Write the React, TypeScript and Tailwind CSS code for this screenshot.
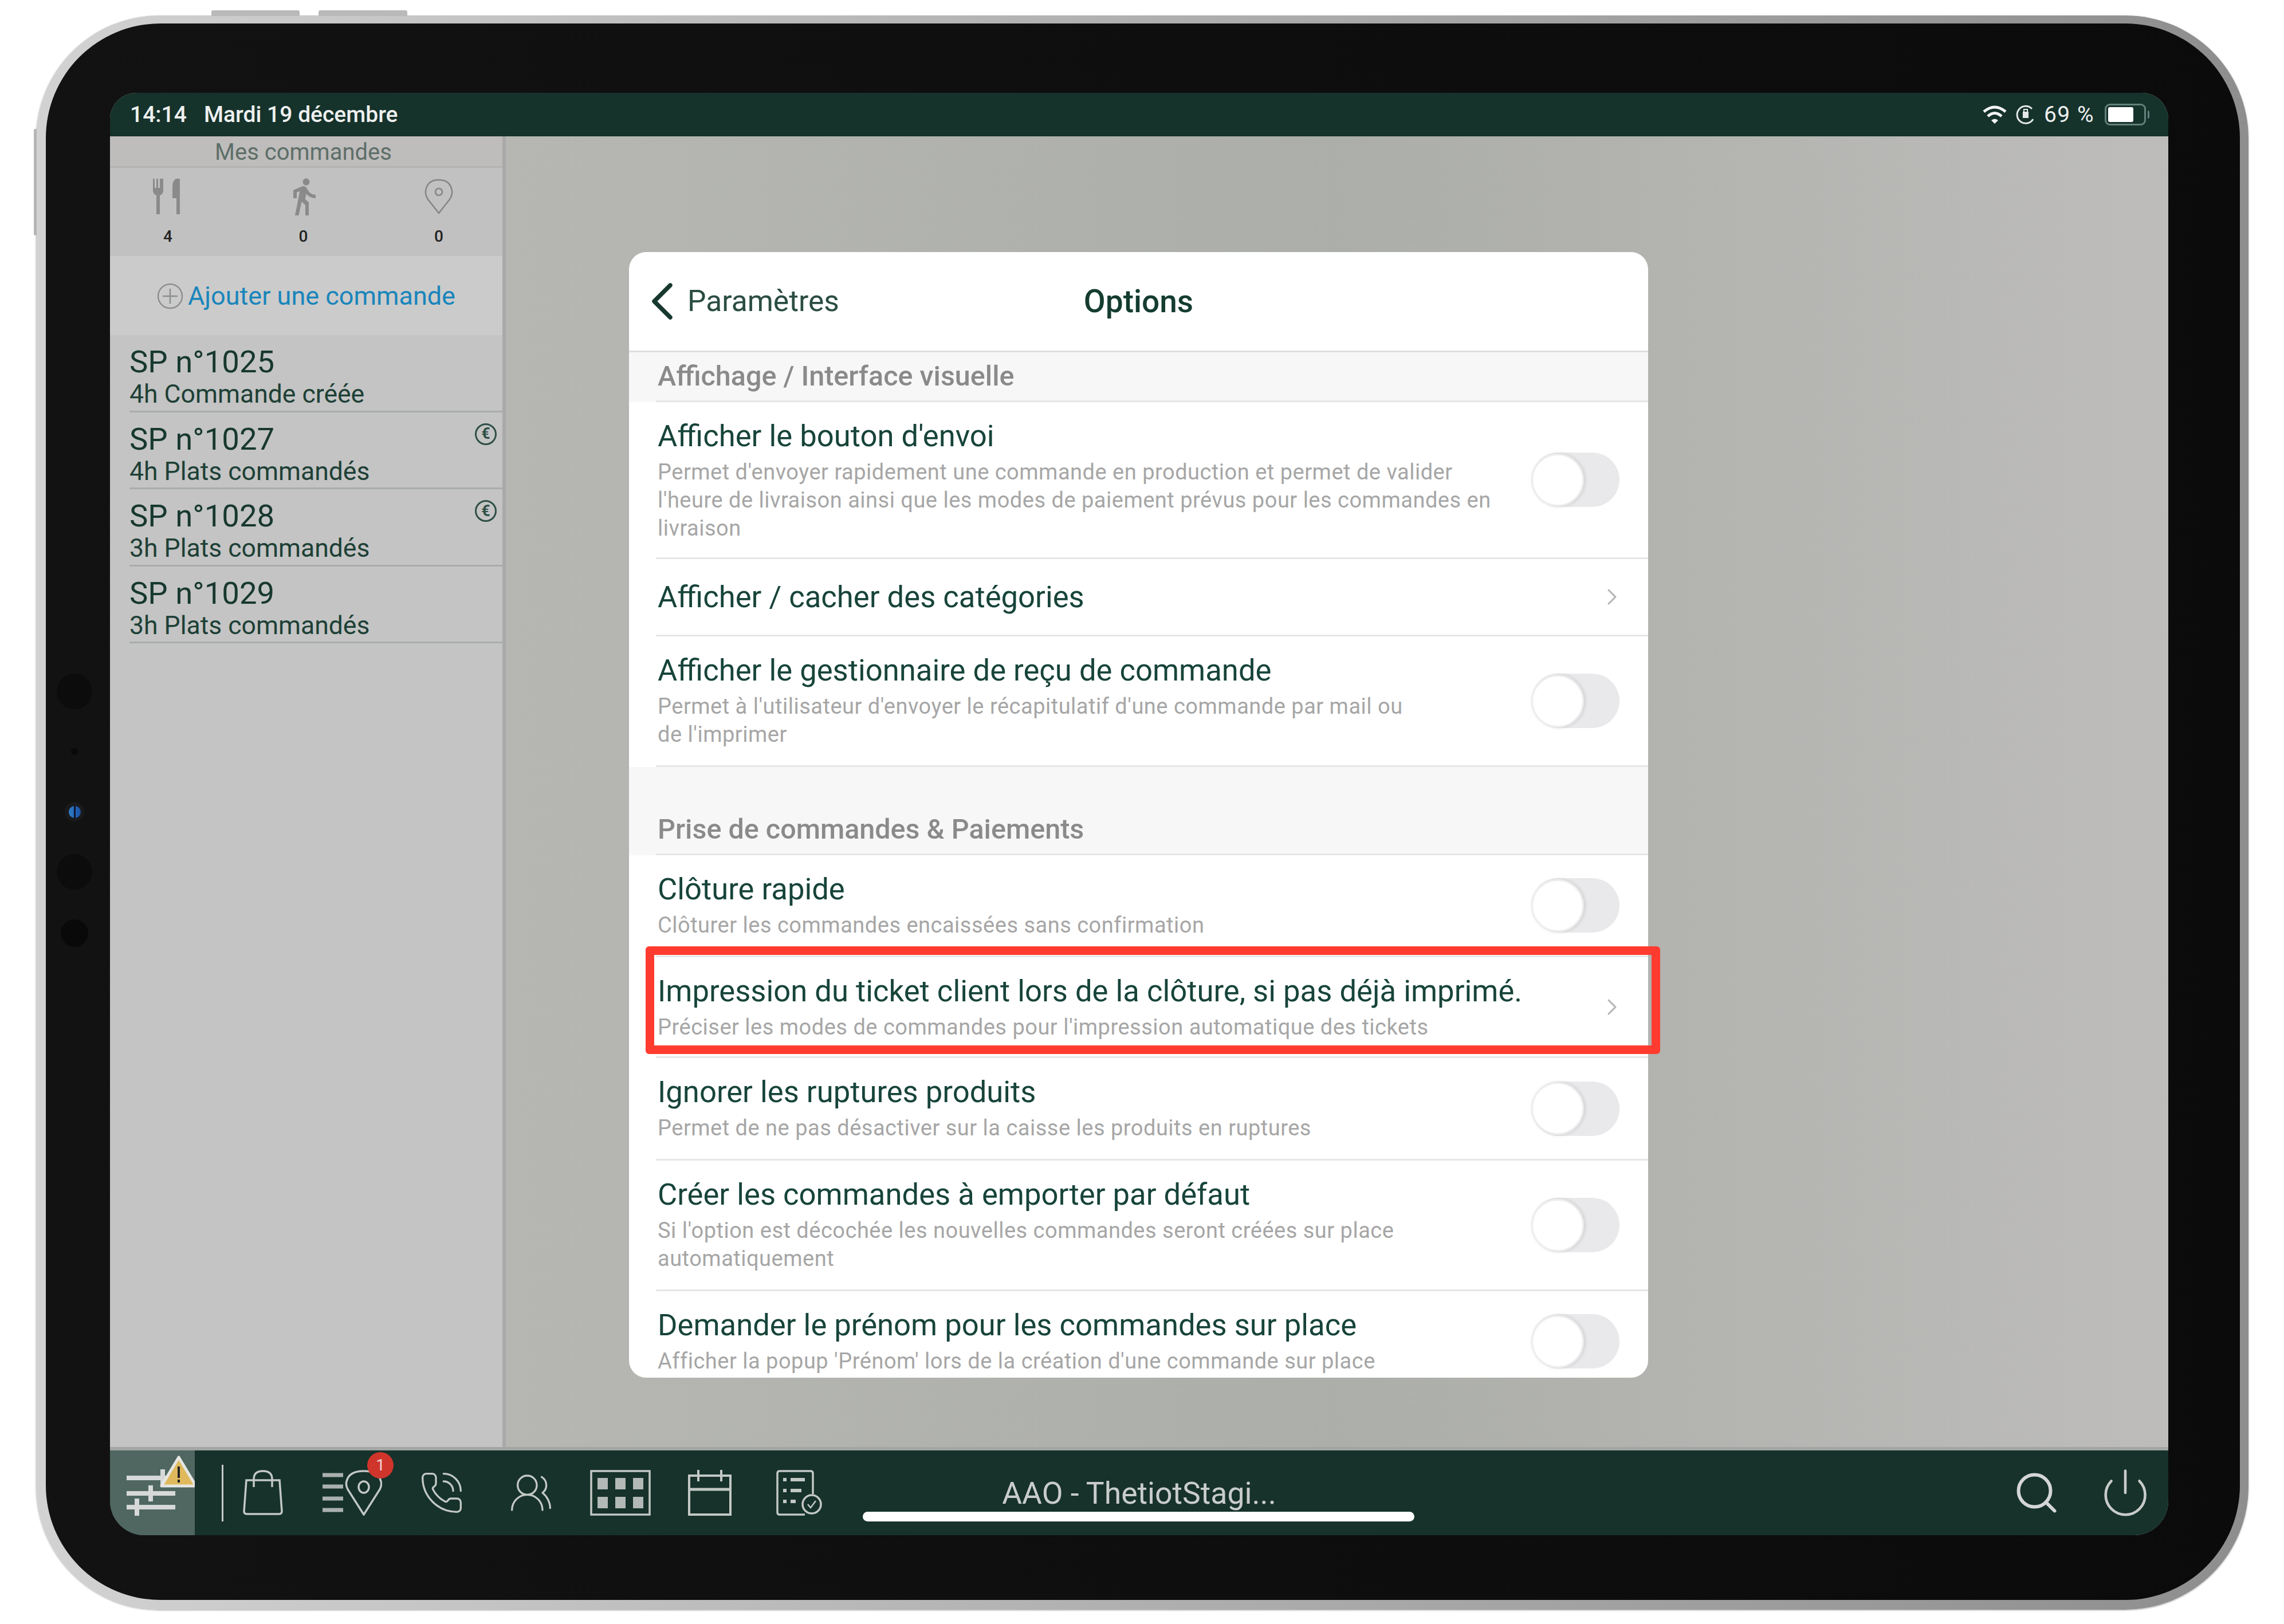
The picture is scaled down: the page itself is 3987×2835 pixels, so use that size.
import React from 'react'
import { ChevronLeft, ChevronRight, PhoneCall, Power, Search, UsersRound } from 'lucide-react'
import { MdDirectionsWalk } from 'react-icons/md'

const font = { fontFamily: '"Roboto", "Liberation Sans", sans-serif' }

const orders = [
  { name: 'SP n°1025', status: '4h Commande créée', paid: false },
  { name: 'SP n°1027', status: '4h Plats commandés', paid: true },
  { name: 'SP n°1028', status: '3h Plats commandés', paid: true },
  { name: 'SP n°1029', status: '3h Plats commandés', paid: false },
]

const Toggle = () => (
  <div className="flex h-[95px] w-[154px] shrink-0 items-center rounded-full bg-[#e9e9eb]">
    <div className="h-[92px] w-[92px] rounded-full border-[3px] border-[#eeeeee] bg-white shadow-[2px_0_6px_rgba(0,0,0,0.12)]" />
  </div>
)

const Chevron = () => <ChevronRight className="mr-[-11px] h-[48px] w-[48px] shrink-0 text-[#b4b4b4]" strokeWidth={1.5} />

const SectionHeader: React.FC<{ label: string; className: string }> = ({ label, className }) => (
  <div className={`flex items-end bg-[#f7f7f7] ${className}`}>
    <div className="ml-[47px] flex-1 border-b-[3px] border-[#e6e6e6] pb-[13px] pl-[3px] text-[48.5px] leading-[58px] font-medium text-[#8a8a8a]">
      {label}
    </div>
  </div>
)

const OptionRow: React.FC<{
  title: string
  desc?: React.ReactNode
  height: string
  chevron?: boolean
}> = ({ title, desc, height, chevron }) => (
  <div className={`ml-[47px] flex items-center justify-between border-b-[3px] border-[#e6e6e6] pr-[50px] pl-[3px] ${height}`}>
    <div className={desc ? 'self-start pt-[26px]' : ''}>
      <div className="text-[52.6px] leading-[66px] text-[#17443a]">{title}</div>
      {desc && <div className="mt-[6px] text-[38px] leading-[49px] tracking-[0.5px] text-[#a6a6a6]">{desc}</div>}
    </div>
    {chevron ? <Chevron /> : <Toggle />}
  </div>
)

const SliderTab = () => (
  <div className="relative flex h-full w-[148px] shrink-0 items-center bg-[#4f6760]">
    <svg width="148" height="148" viewBox="0 0 148 148" className="shrink-0">
      <g fill="#d6d9d8">
        <rect x="29" y="44" width="85" height="8" />
        <rect x="29" y="71" width="85" height="8" />
        <rect x="29" y="95" width="85" height="8" />
        <rect x="88" y="33" width="8" height="30" />
        <rect x="67" y="61" width="8" height="28" />
        <rect x="43" y="84" width="8" height="30" />
      </g>
      <path d="M120 12 L150 62 H90 Z" fill="#dfb95c" stroke="#e6e6e2" strokeWidth="5" strokeLinejoin="round" />
      <rect x="118" y="28" width="4" height="20" fill="#222" />
      <rect x="118" y="51" width="4" height="5" fill="#222" />
    </svg>
  </div>
)

const iconStroke = '#c3c8c5'

const BagIcon = () => (
  <svg width="70" height="80" viewBox="0 0 70 80" fill="none" stroke={iconStroke} strokeWidth="3.5">
    <path d="M6 18 H64 L68 72 Q68 77 63 77 H7 Q2 77 2 72 Z" />
    <path d="M19 30 V16 Q19 2 35 2 Q51 2 51 16 V30" />
  </svg>
)

const RouteIcon = () => (
  <div className="relative flex shrink-0">
    <svg width="104" height="80" viewBox="0 0 104 80" fill="none" stroke={iconStroke} strokeWidth="3.5">
      <g stroke="#a9b0ad" strokeWidth="7">
        <path d="M0 9 H36 M0 29 H36 M0 50 H36 M0 70 H36" />
      </g>
      <path d="M72 78 L44 34 Q40 26 42 20 Q46 2 72 2 Q98 2 102 20 Q104 26 100 34 Z" />
      <ellipse cx="72" cy="30" rx="9" ry="10" />
    </svg>
    <div className="absolute top-[-31px] right-[-20px] flex h-[46px] w-[46px] items-center justify-center rounded-full bg-[#d0352c] text-[28px] text-[#f2d6d4]">
      1
    </div>
  </div>
)

const GridIcon = () => (
  <svg width="106" height="80" viewBox="0 0 106 80" fill="none" className="shrink-0">
    <rect x="2" y="2" width="102" height="76" stroke={iconStroke} strokeWidth="3.5" />
    <g fill="#b3b9b6">
      <rect x="13" y="14" width="18" height="20" />
      <rect x="44" y="14" width="18" height="20" />
      <rect x="75" y="14" width="18" height="20" />
      <rect x="13" y="47" width="18" height="20" />
      <rect x="44" y="47" width="18" height="20" />
      <rect x="75" y="47" width="18" height="20" />
    </g>
  </svg>
)

const CalendarIcon = () => (
  <svg width="76" height="80" viewBox="0 0 76 80" fill="none" stroke={iconStroke} strokeWidth="4">
    <rect x="2" y="10" width="72" height="68" />
    <path d="M2 34 H74" strokeWidth="5" />
    <path d="M18 0 V20 M58 0 V20" />
  </svg>
)

const ChecklistIcon = () => (
  <svg width="80" height="80" viewBox="0 0 80 80" fill="none" stroke={iconStroke} strokeWidth="3.5">
    <path d="M50 78 H6 Q2 78 2 74 V6 Q2 2 6 2 H60 Q64 2 64 6 V42" />
    <path d="M12 17 H18 M25 17 H50 M12 36 H18 M25 36 H44 M12 55 H18 M25 55 H34" strokeWidth="6" />
    <circle cx="62" cy="60" r="16" />
    <path d="M55 60 L60 66 L69 54" strokeWidth="2.5" />
  </svg>
)

const WifiIcon = () => (
  <svg width="44" height="34" viewBox="0 0 44 34" fill="none" stroke="#f2f4f3" strokeWidth="5" strokeLinecap="butt">
    <path d="M3 12 Q22 -4 41 12" />
    <path d="M10 20 Q22 9 34 20" />
    <path d="M16 27 L22 33 L28 27 Q22 22 16 27 Z" fill="#f2f4f3" stroke="none" />
  </svg>
)

const LockIcon = () => (
  <svg width="34" height="36" viewBox="0 0 34 36" fill="none" stroke="#e4e8e6" strokeWidth="3">
    <path d="M28 8 A15 15 0 1 0 30 26" />
    <rect x="12" y="13" width="10" height="11" fill="#e4e8e6" stroke="none" />
    <path d="M14 13 V9 H20 V13" strokeWidth="2" />
  </svg>
)

const PinIcon = () => (
  <svg width="50" height="62" viewBox="0 0 50 62" fill="none" stroke="#858585" strokeWidth="2.5">
    <path d="M25 60 L6 36 Q1 28 2 21 Q5 2 25 2 Q45 2 48 21 Q49 28 44 36 Z" />
    <circle cx="25" cy="23" r="6" />
  </svg>
)

const CutleryIcon = () => (
  <svg width="52" height="62" viewBox="0 0 52 62" fill="#8a8a8a">
    <path d="M0 0 H3 V16 H6 V0 H9 V16 H12 V0 H15 V0 H18 V20 Q18 27 12 29 V62 H6 V29 Q0 27 0 20 Z" />
    <path d="M40 0 H47 V62 H41 V34 H34 V14 Q34 4 40 0 Z" />
  </svg>
)

const Sidebar = () => (
  <div className="flex w-[691px] shrink-0 flex-col border-r-[6px] border-[#a9a9a9] bg-[#c4c4c4]">
    <div className="flex h-[55px] items-center justify-center border-b-[3px] border-[#b5b2b2] bg-[#bfbcbc] pt-[3px] pr-[10px] text-[40px] text-[#5d6f68]">
      Mes commandes
    </div>
    <div className="flex h-[154px] items-start justify-center bg-[#c1c1c1] pt-[17px] pr-[10px]">
      {[<CutleryIcon key="a" />, <MdDirectionsWalk key="b" size={72} color="#8a8a8a" />, <PinIcon key="c" />].map((icon, i) => (
        <div key={i} className="flex w-[236.5px] shrink-0 flex-col items-center">
          <div className="flex h-[66px] items-center">{icon}</div>
          <div className="mt-[20px] text-[28px] leading-[34px] font-medium text-[#222222]">{i === 0 ? 4 : 0}</div>
        </div>
      ))}
    </div>
    <div className="flex h-[138px] items-center justify-center gap-[8px] bg-[#cbcbcb] pt-[2px] text-[45px] text-[#1985bb]">
      <svg width="46" height="46" viewBox="0 0 46 46" fill="none" stroke="#8b8f8e" strokeWidth="2.5">
        <circle cx="23" cy="23" r="21" />
        <path d="M23 10 V36 M10 23 H36" />
      </svg>
      <span>Ajouter une commande</span>
    </div>
    {orders.map((order) => (
      <div key={order.name} className="ml-[34px] flex h-[134.5px] flex-col justify-start border-b-[3px] border-[#a8adab] pt-[14px]">
        <div className="flex items-start justify-between">
          <div className="text-[54.5px] leading-[64px] text-[#17382f]">{order.name}</div>
          {order.paid && (
            <div className="mt-[5px] mr-[10px] flex h-[38px] w-[38px] items-center justify-center rounded-full border-[3px] border-[#2f4f46] text-[27px] leading-none font-bold text-[#2f4f46]">
              €
            </div>
          )}
        </div>
        <div className="text-[44.5px] leading-[50px] text-[#1d4036]">{order.status}</div>
      </div>
    ))}
  </div>
)

const OptionsModal = () => (
  <div className="relative h-[1965px] w-[1779px]">
    <div className="h-full overflow-hidden rounded-[30px] bg-white">
      <div className="relative flex h-[175px] items-center justify-center border-b-[3px] border-[#dedede]">
        <div className="absolute left-[2px] flex items-center text-[51.5px] text-[#2b4d43]">
          <ChevronLeft className="h-[112px] w-[112px] text-[#17382f]" strokeWidth={1.6} />
          <span className="ml-[-12px]">Paramètres</span>
        </div>
        <div className="text-[55px] font-medium text-[#143c30]">Options</div>
      </div>
      <SectionHeader label="Affichage / Interface visuelle" className="h-[87px]" />
      <OptionRow
        title="Afficher le bouton d'envoi"
        height="h-[274px]"
        desc={
          <>
            Permet d'envoyer rapidement une commande en production et permet de valider
            <br />
            l'heure de livraison ainsi que les modes de paiement prévus pour les commandes en
            <br />
            livraison
          </>
        }
      />
      <OptionRow title="Afficher / cacher des catégories" height="h-[135px]" chevron />
      <OptionRow
        title="Afficher le gestionnaire de reçu de commande"
        height="h-[228px]"
        desc={
          <>
            Permet à l'utilisateur d'envoyer le récapitulatif d'une commande par mail ou
            <br />
            de l'imprimer
          </>
        }
      />
      <SectionHeader label="Prise de commandes & Paiements" className="h-[154px]" />
      <OptionRow title="Clôture rapide" height="h-[178px]" desc="Clôturer les commandes encaissées sans confirmation" />
      <OptionRow
        title="Impression du ticket client lors de la clôture, si pas déjà imprimé."
        height="h-[176px]"
        desc="Préciser les modes de commandes pour l'impression automatique des tickets"
        chevron
      />
      <OptionRow title="Ignorer les ruptures produits" height="h-[179px]" desc="Permet de ne pas désactiver sur la caisse les produits en ruptures" />
      <OptionRow
        title="Créer les commandes à emporter par défaut"
        height="h-[228px]"
        desc={
          <>
            Si l'option est décochée les nouvelles commandes seront créées sur place
            <br />
            automatiquement
          </>
        }
      />
      <OptionRow title="Demander le prénom pour les commandes sur place" height="h-[178px]" desc="Afficher la popup 'Prénom' lors de la création d'une commande sur place" />
    </div>
    <div className="absolute top-[1212px] left-[29px] h-[188px] w-[1771px] rounded-[6px] border-[15px] border-[#ff3b30]" />
  </div>
)

const BottomBar = () => (
  <div className="relative grid h-[154px] shrink-0 grid-cols-[1fr_auto_1fr] border-t-[6px] border-[#a3a6a4] bg-[#16322a]">
    <div className="flex items-center">
      <SliderTab />
      <div className="ml-[47px] h-[99px] w-[3px] bg-[#c8cbc9]" />
      <div className="ml-[29px] flex items-center gap-[76px]">
        {[
          <BagIcon key="bag" />,
          <RouteIcon key="route" />,
          <PhoneCall key="phone" size={84} color={iconStroke} strokeWidth={1} />,
          <UsersRound key="users" size={84} color={iconStroke} strokeWidth={1} />,
          <GridIcon key="grid" />,
          <CalendarIcon key="calendar" />,
          <ChecklistIcon key="checklist" />,
        ].map((icon, i) => (
          <div key={i} className="flex w-[80px] justify-center">
            {icon}
          </div>
        ))}
      </div>
    </div>
    <div className="flex items-start justify-center pt-[45px] text-[53.5px] leading-[60px] text-[#c9cccb]">AAO - ThetiotStagi...</div>
    <div className="flex items-center justify-end gap-[67px] pr-[29px]">
      <Search size={84} color="#d4d6d5" strokeWidth={1.7} />
      <Power size={92} color="#c8cbc9" strokeWidth={1.2} />
    </div>
    <div className="absolute bottom-[24px] left-[1314px] h-[17px] w-[963px] rounded-full bg-white" />
  </div>
)

export default function App() {
  return (
    <div className="h-[2835px] w-[3987px] bg-white pt-[27px] pl-[63px]" style={font}>
      <div className="relative h-[2783px] w-[3862px] rounded-[215px] bg-linear-to-r from-[#d2d2d2] to-[#8e8e8e] pt-[14px] pr-[15px] pb-[17px] pl-[17px] shadow-[0_1px_3px_rgba(0,0,0,0.35)]">
        {/* side and top buttons */}
        <div className="absolute top-[-9px] left-[306px] h-[10px] w-[154px] rounded-t-[3px] bg-[#b9b9b9]" />
        <div className="absolute top-[-9px] left-[493px] h-[10px] w-[155px] rounded-t-[3px] bg-[#b9b9b9]" />
        <div className="absolute top-[198px] left-[-4px] h-[186px] w-[5px] rounded-l-[3px] bg-[#b5b5b5]" />

        <div className="flex h-full rounded-[200px] bg-linear-to-r from-[#121212] to-[#0b0b0b]">
          {/* front camera */}
          <div className="flex w-[112px] shrink-0 flex-col items-center justify-center pr-[12px] pb-[5px]">
            <div className="h-[62px] w-[62px] rounded-full bg-[#0c0c0c]" />
            <div className="mt-[68px] h-[12px] w-[12px] rounded-full bg-[#090909]" />
            <div className="mt-[82px] flex h-[34px] w-[34px] items-center justify-center rounded-full bg-[#1a1a1c]">
              <div className="flex h-[21px] w-[21px] justify-center rounded-full bg-linear-to-r from-[#2f7fc8] to-[#1b4fa0]">
                <div className="h-full w-[3px] bg-[#0d1530]" />
              </div>
            </div>
            <div className="mt-[57px] h-[62px] w-[62px] rounded-full bg-[#0c0c0c]" />
            <div className="mt-[52px] h-[48px] w-[48px] rounded-full bg-[#090909]" />
          </div>

          <div className="mt-[121px] mr-[125px] mb-[113px] flex min-w-0 flex-1 flex-col overflow-hidden rounded-t-[46px] rounded-b-[60px] bg-[#bdbcbb]">
            <div className="flex h-[76px] shrink-0 items-center justify-between bg-[#15322b] pr-[33px] pl-[35px] text-[39px] text-[#eef0ef]">
              <div className="flex gap-[30px] font-medium">
                <span>14:14</span>
                <span>Mardi 19 décembre</span>
              </div>
              <div className="flex items-center">
                <WifiIcon />
                <div className="ml-[15px]">
                  <LockIcon />
                </div>
                <span className="ml-[15px] tracking-[1.5px]">69 %</span>
                <div className="ml-[18px] flex h-[38px] w-[72px] items-center rounded-[9px] border-[3px] border-[#63807a] p-[3px]">
                  <div className="h-full w-[44px] rounded-[3px] bg-white" />
                </div>
                <div className="ml-[3px] h-[14px] w-[3px] rounded-r-full bg-[#63807a]" />
              </div>
            </div>

            <div className="flex min-h-0 flex-1">
              <Sidebar />
              <div className="flex-1 bg-linear-to-r from-[#b6b7b3] via-[#acaea9] to-[#bdbcbb] pt-[202px] pl-[215px]">
                <OptionsModal />
              </div>
            </div>

            <BottomBar />
          </div>
        </div>
      </div>
    </div>
  )
}
